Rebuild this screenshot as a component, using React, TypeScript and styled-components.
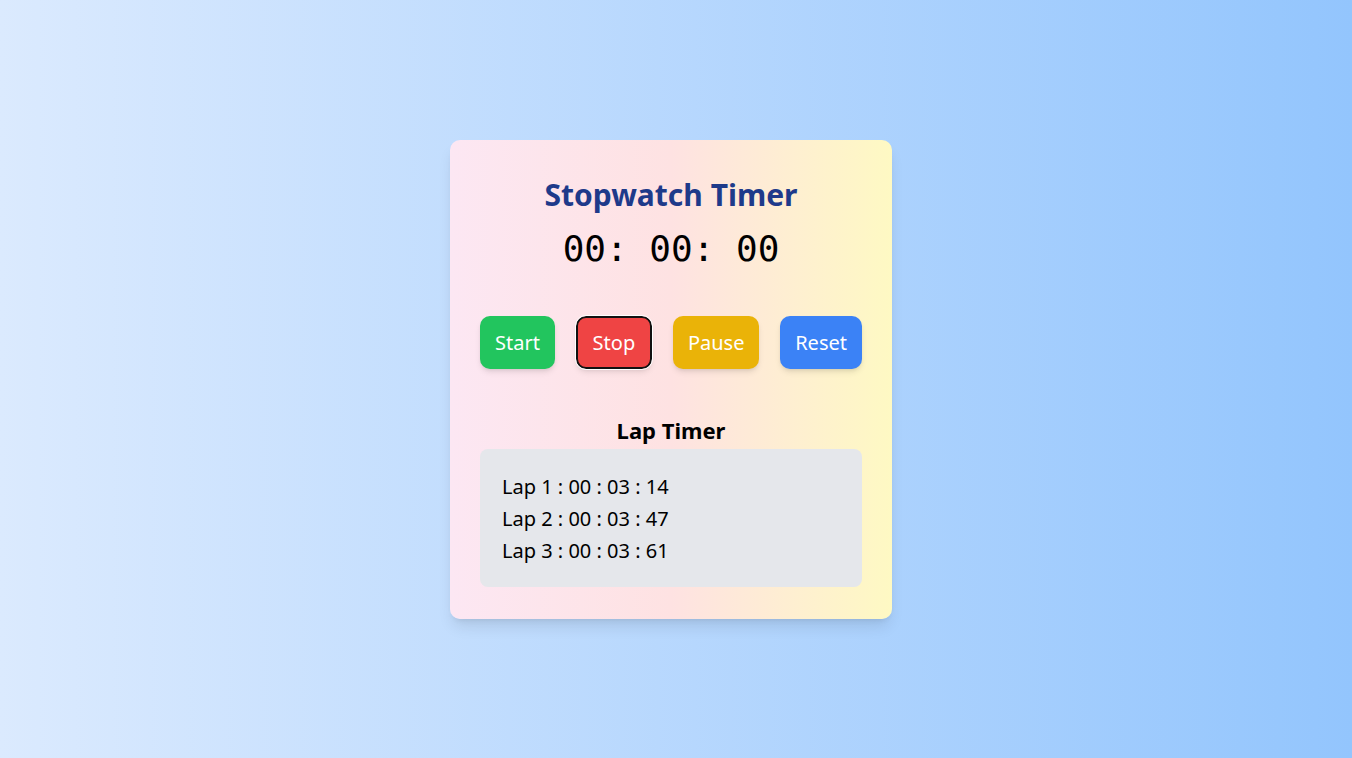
import styled, { createGlobalStyle } from 'styled-components';

const GlobalStyle = createGlobalStyle`
  html, body {
    margin: 0;
    padding: 0;
  }
  body {
    font-family: 'Noto Sans', 'Open Sans', sans-serif;
  }
  * {
    box-sizing: border-box;
  }
`;

const laps = ['00 : 03 : 14', '00 : 03 : 47', '00 : 03 : 61'];

const buttons = [
  { label: 'Start', color: '#22c55e', focused: false },
  { label: 'Stop', color: '#ef4444', focused: true },
  { label: 'Pause', color: '#eab308', focused: false },
  { label: 'Reset', color: '#3b82f6', focused: false },
];

function App() {
  return (
    <>
      <GlobalStyle />
      <StPage>
        <StCard>
          <StTitle>Stopwatch Timer</StTitle>
          <StClock>00: 00: 00</StClock>
          <StButtonRow>
            {buttons.map((b) => (
              <StButton key={b.label} $color={b.color} $focused={b.focused}>
                {b.label}
              </StButton>
            ))}
          </StButtonRow>
          <StLapTitle>Lap Timer</StLapTitle>
          <StLapBox>
            {laps.map((lap, i) => (
              <StLapItem key={i}>
                Lap {i + 1} : {lap}
              </StLapItem>
            ))}
          </StLapBox>
        </StCard>
      </StPage>
    </>
  );
}

export default App;

const StPage = styled.div`
  width: 100%;
  min-height: 100vh;
  padding: 1px 10px 0 0;
  display: flex;
  align-items: center;
  justify-content: center;
  background: linear-gradient(to right, #dbeafe, #93c5fd);
`;

const StCard = styled.div`
  width: 442px;
  padding: 32px 30px;
  border-radius: 10px;
  background: linear-gradient(to right, #fce7f3, #fee2e2, #fef9c3);
  box-shadow: 0 10px 15px -3px rgba(0, 0, 0, 0.1), 0 4px 6px -4px rgba(0, 0, 0, 0.1);
  display: flex;
  flex-direction: column;
  align-items: center;
`;

const StTitle = styled.h1`
  margin: 4px 0 0;
  font-size: 30px;
  line-height: 38px;
  font-weight: 700;
  color: #1e3a8a;
`;

const StClock = styled.div`
  margin-top: 15px;
  font-family: 'DejaVu Sans Mono', 'Liberation Mono', monospace;
  font-size: 36px;
  line-height: 40px;
  color: #000;
`;

const StButtonRow = styled.div`
  width: 100%;
  margin-top: 47px;
  display: flex;
  justify-content: space-between;
`;

const StButton = styled.button<{ $color: string; $focused: boolean }>`
  height: 53px;
  padding: 0 ${(p) => (p.$focused ? '15px' : '13px')};
  border: ${(p) => (p.$focused ? '2px solid #111' : '2px solid transparent')};
  border-radius: 10px;
  background: ${(p) => p.$color};
  color: #fff;
  font-family: inherit;
  font-size: 20px;
  box-shadow: 0 4px 6px -1px rgba(0, 0, 0, 0.1), 0 2px 4px -2px rgba(0, 0, 0, 0.1);
  outline: ${(p) => (p.$focused ? '1px solid #fff' : 'none')};
  cursor: pointer;
`;

const StLapTitle = styled.h2`
  margin: 46px 0 0;
  font-size: 22px;
  line-height: 30px;
  font-weight: 700;
  color: #000;
`;

const StLapBox = styled.div`
  width: 100%;
  margin-top: 4px;
  padding: 22px 22px 20px;
  border-radius: 8px;
  background: #e5e7eb;
`;

const StLapItem = styled.div`
  font-size: 20px;
  line-height: 32px;
  color: #000;
`;
